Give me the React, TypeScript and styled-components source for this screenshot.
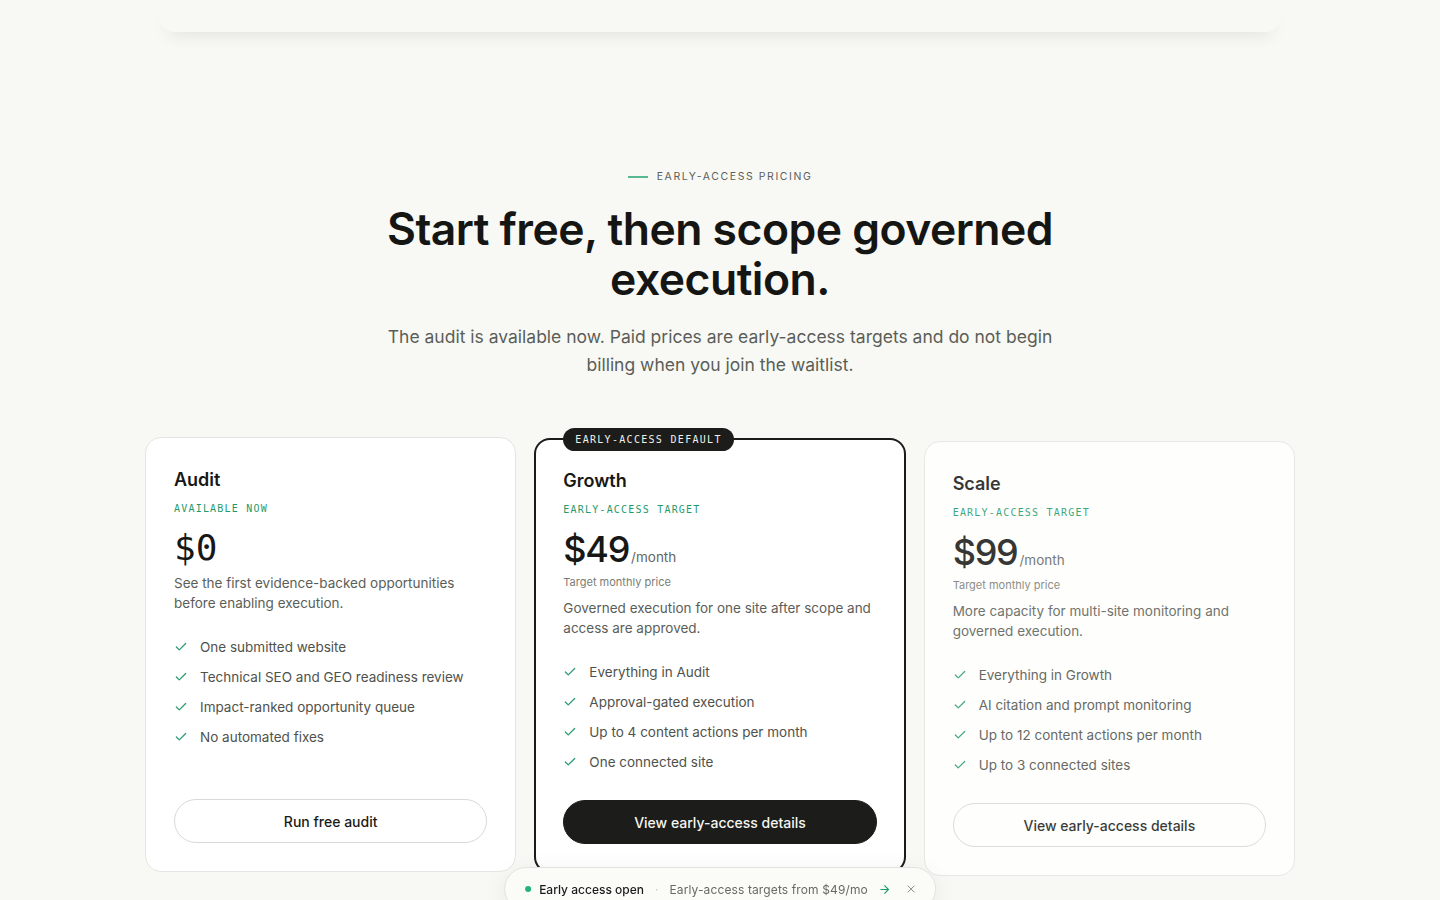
import React from "react";
import styled, { createGlobalStyle } from "styled-components";
import { Check, ArrowRight, X } from "lucide-react";

const GlobalStyle = createGlobalStyle`
  html, body {
    margin: 0;
    padding: 0;
    background: #f8f9f5;
    color: #171816;
    font-family: "Inter", "Noto Sans", sans-serif;
    -webkit-font-smoothing: antialiased;
  }
  * { box-sizing: border-box; }
`;

const MONO = `"DejaVu Sans Mono", "Liberation Mono", monospace`;

type Plan = {
  name: string;
  label: string;
  price: string;
  mono?: boolean;
  per?: string;
  note?: string;
  description: string;
  features: string[];
  cta: string;
  featured?: boolean;
  badge?: string;
  settling?: boolean;
};

const PLANS: Plan[] = [
  {
    name: "Audit",
    label: "AVAILABLE NOW",
    price: "$0",
    mono: true,
    description: "See the first evidence-backed opportunities before enabling execution.",
    features: [
      "One submitted website",
      "Technical SEO and GEO readiness review",
      "Impact-ranked opportunity queue",
      "No automated fixes",
    ],
    cta: "Run free audit",
  },
  {
    name: "Growth",
    label: "EARLY-ACCESS TARGET",
    price: "$49",
    per: "/month",
    note: "Target monthly price",
    description: "Governed execution for one site after scope and access are approved.",
    features: [
      "Everything in Audit",
      "Approval-gated execution",
      "Up to 4 content actions per month",
      "One connected site",
    ],
    cta: "View early-access details",
    featured: true,
    badge: "EARLY-ACCESS DEFAULT",
  },
  {
    name: "Scale",
    label: "EARLY-ACCESS TARGET",
    price: "$99",
    per: "/month",
    note: "Target monthly price",
    description: "More capacity for multi-site monitoring and governed execution.",
    features: [
      "Everything in Growth",
      "AI citation and prompt monitoring",
      "Up to 12 content actions per month",
      "Up to 3 connected sites",
    ],
    cta: "View early-access details",
    settling: true,
  },
];

export default function App() {
  return (
    <>
      <GlobalStyle />
      <Page>
        <NavShadow />
        <Section>
          <Eyebrow>
            <EyebrowRule />
            EARLY-ACCESS PRICING
          </Eyebrow>
          <Heading>
            Start free, then scope governed
            <br />
            execution.
          </Heading>
          <Lead>
            The audit is available now. Paid prices are early-access targets and do not begin
            billing when you join the waitlist.
          </Lead>

          <Grid>
            {PLANS.map((plan) => (
              <Card key={plan.name} $featured={plan.featured} $settling={plan.settling}>
                {plan.badge && <Badge>{plan.badge}</Badge>}
                <PlanName>{plan.name}</PlanName>
                <PlanLabel>{plan.label}</PlanLabel>
                <PriceRow>
                  <Price $mono={plan.mono}>{plan.price}</Price>
                  {plan.per && <Per>{plan.per}</Per>}
                </PriceRow>
                {plan.note && <PriceNote>{plan.note}</PriceNote>}
                <Description $tight={!plan.note}>{plan.description}</Description>
                <Features>
                  {plan.features.map((f) => (
                    <Feature key={f}>
                      <Check size={14} strokeWidth={2.2} color="#2c9c70" />
                      <span>{f}</span>
                    </Feature>
                  ))}
                </Features>
                <CtaButton $primary={plan.featured}>{plan.cta}</CtaButton>
              </Card>
            ))}
          </Grid>
        </Section>
      </Page>

      <Toast>
        <LiveDot />
        <ToastStrong>Early access open</ToastStrong>
        <ToastSep>·</ToastSep>
        <ToastText>Early-access targets from $49/mo</ToastText>
        <ArrowRight size={13} strokeWidth={2} color="#1f9b6b" />
        <CloseBtn>
          <X size={12} strokeWidth={2} />
        </CloseBtn>
      </Toast>
    </>
  );
}

const Page = styled.div`
  min-height: 100vh;
  overflow: hidden;
`;

const NavShadow = styled.div`
  width: 1120px;
  height: 32px;
  margin: 0 auto;
  background: #f8f9f5;
  border-radius: 0 0 14px 14px;
  box-shadow: 0 10px 18px -10px rgba(40, 45, 30, 0.16);
`;

const Section = styled.section`
  display: flex;
  flex-direction: column;
  align-items: center;
  padding: 137px 0 80px;
`;

const Eyebrow = styled.div`
  display: flex;
  align-items: center;
  gap: 9px;
  font-size: 10.5px;
  line-height: 16px;
  letter-spacing: 0.15em;
  color: #5d605a;
`;

const EyebrowRule = styled.span`
  width: 20px;
  height: 1.5px;
  background: #58b98f;
`;

const Heading = styled.h1`
  margin: 19px 0 0;
  font-size: 44.5px;
  line-height: 50px;
  font-weight: 600;
  letter-spacing: -0.012em;
  text-align: center;
  color: #151614;
`;

const Lead = styled.p`
  margin: 19px 0 0;
  max-width: 700px;
  font-size: 17.5px;
  line-height: 28px;
  text-align: center;
  color: #5b5e58;
`;

const Grid = styled.div`
  margin-top: 58px;
  width: 1150px;
  display: grid;
  grid-template-columns: repeat(3, 1fr);
  gap: 18px;
  align-items: stretch;
`;

const Card = styled.div<{ $featured?: boolean; $settling?: boolean }>`
  position: relative;
  display: flex;
  flex-direction: column;
  min-height: 435px;
  padding: ${(p) => (p.$featured ? "27px" : "28px")};
  background: #ffffff;
  border: ${(p) => (p.$featured ? "2px solid #1b1c1a" : "1px solid #e5e6e1")};
  border-radius: 16px;
  margin-top: ${(p) => (p.$featured ? "1px" : p.$settling ? "4px" : "0")};
  margin-bottom: ${(p) => (p.$featured ? "-1px" : p.$settling ? "-4px" : "0")};
  opacity: ${(p) => (p.$settling ? 0.86 : 1)};
`;

const Badge = styled.span`
  position: absolute;
  top: -12px;
  left: 27px;
  height: 23px;
  display: inline-flex;
  align-items: center;
  padding: 0 12px;
  border-radius: 12px;
  background: #1c1d1b;
  color: #f1f1ec;
  font-family: ${MONO};
  font-size: 10px;
  letter-spacing: 0.13em;
`;

const PlanName = styled.h3`
  margin: 1px 0 0;
  font-size: 18px;
  line-height: 26px;
  font-weight: 600;
  color: #171816;
`;

const PlanLabel = styled.div`
  margin-top: 9px;
  font-family: ${MONO};
  font-size: 10px;
  line-height: 14px;
  letter-spacing: 0.12em;
  color: #1f9a6a;
`;

const PriceRow = styled.div`
  margin-top: 12px;
  display: flex;
  align-items: baseline;
  gap: 2px;
`;

const Price = styled.span<{ $mono?: boolean }>`
  font-family: ${(p) => (p.$mono ? MONO : `"Inter", sans-serif`)};
  font-size: 36px;
  line-height: 40px;
  font-weight: ${(p) => (p.$mono ? 400 : 500)};
  letter-spacing: ${(p) => (p.$mono ? "0" : "-0.035em")};
  color: #171816;
`;

const Per = styled.span`
  font-size: 13.5px;
  color: #63665f;
`;

const PriceNote = styled.div`
  margin-top: 5px;
  font-size: 11px;
  line-height: 16px;
  color: #7a7d76;
`;

const Description = styled.p<{ $tight?: boolean }>`
  margin: ${(p) => (p.$tight ? "5px" : "8px")} 0 0;
  font-size: 13.5px;
  line-height: 20px;
  color: #5b5e58;
`;

const Features = styled.ul`
  list-style: none;
  margin: 24px 0 0;
  padding: 0;
  display: flex;
  flex-direction: column;
  gap: 10px;
`;

const Feature = styled.li`
  display: flex;
  align-items: center;
  gap: 12px;
  font-size: 13.5px;
  line-height: 20px;
  color: #4f524c;
`;

const CtaButton = styled.button<{ $primary?: boolean }>`
  margin-top: auto;
  height: 44px;
  width: 100%;
  border-radius: 22px;
  border: 1px solid ${(p) => (p.$primary ? "#1c1d1b" : "#d9dad5")};
  background: ${(p) => (p.$primary ? "#1c1d1b" : "#ffffff")};
  color: ${(p) => (p.$primary ? "#f5f5f1" : "#1a1b19")};
  font-family: "Inter", sans-serif;
  font-size: 14px;
  font-weight: 500;
  cursor: pointer;
`;

const Toast = styled.div`
  position: fixed;
  left: 50%;
  bottom: -11px;
  transform: translateX(-50%);
  height: 44px;
  display: flex;
  align-items: center;
  padding: 0 18px 0 20px;
  background: #fbfbf8;
  border: 1px solid #e2e3de;
  border-radius: 22px;
  box-shadow: 0 6px 24px rgba(30, 35, 25, 0.08);
  white-space: nowrap;
  & > svg {
    margin-left: 10px;
  }
`;

const LiveDot = styled.span`
  width: 6px;
  height: 6px;
  border-radius: 50%;
  background: #22b37a;
  margin-right: 8px;
`;

const ToastStrong = styled.span`
  font-size: 12px;
  font-weight: 500;
  color: #1b1c1a;
`;

const ToastSep = styled.span`
  margin: 0 11px;
  font-size: 12px;
  color: #c4c6c0;
`;

const ToastText = styled.span`
  font-size: 12px;
  letter-spacing: 0.01em;
  color: #686b65;
`;

const CloseBtn = styled.span`
  display: inline-flex;
  margin-left: 14px;
  color: #8a8d86;
`;
